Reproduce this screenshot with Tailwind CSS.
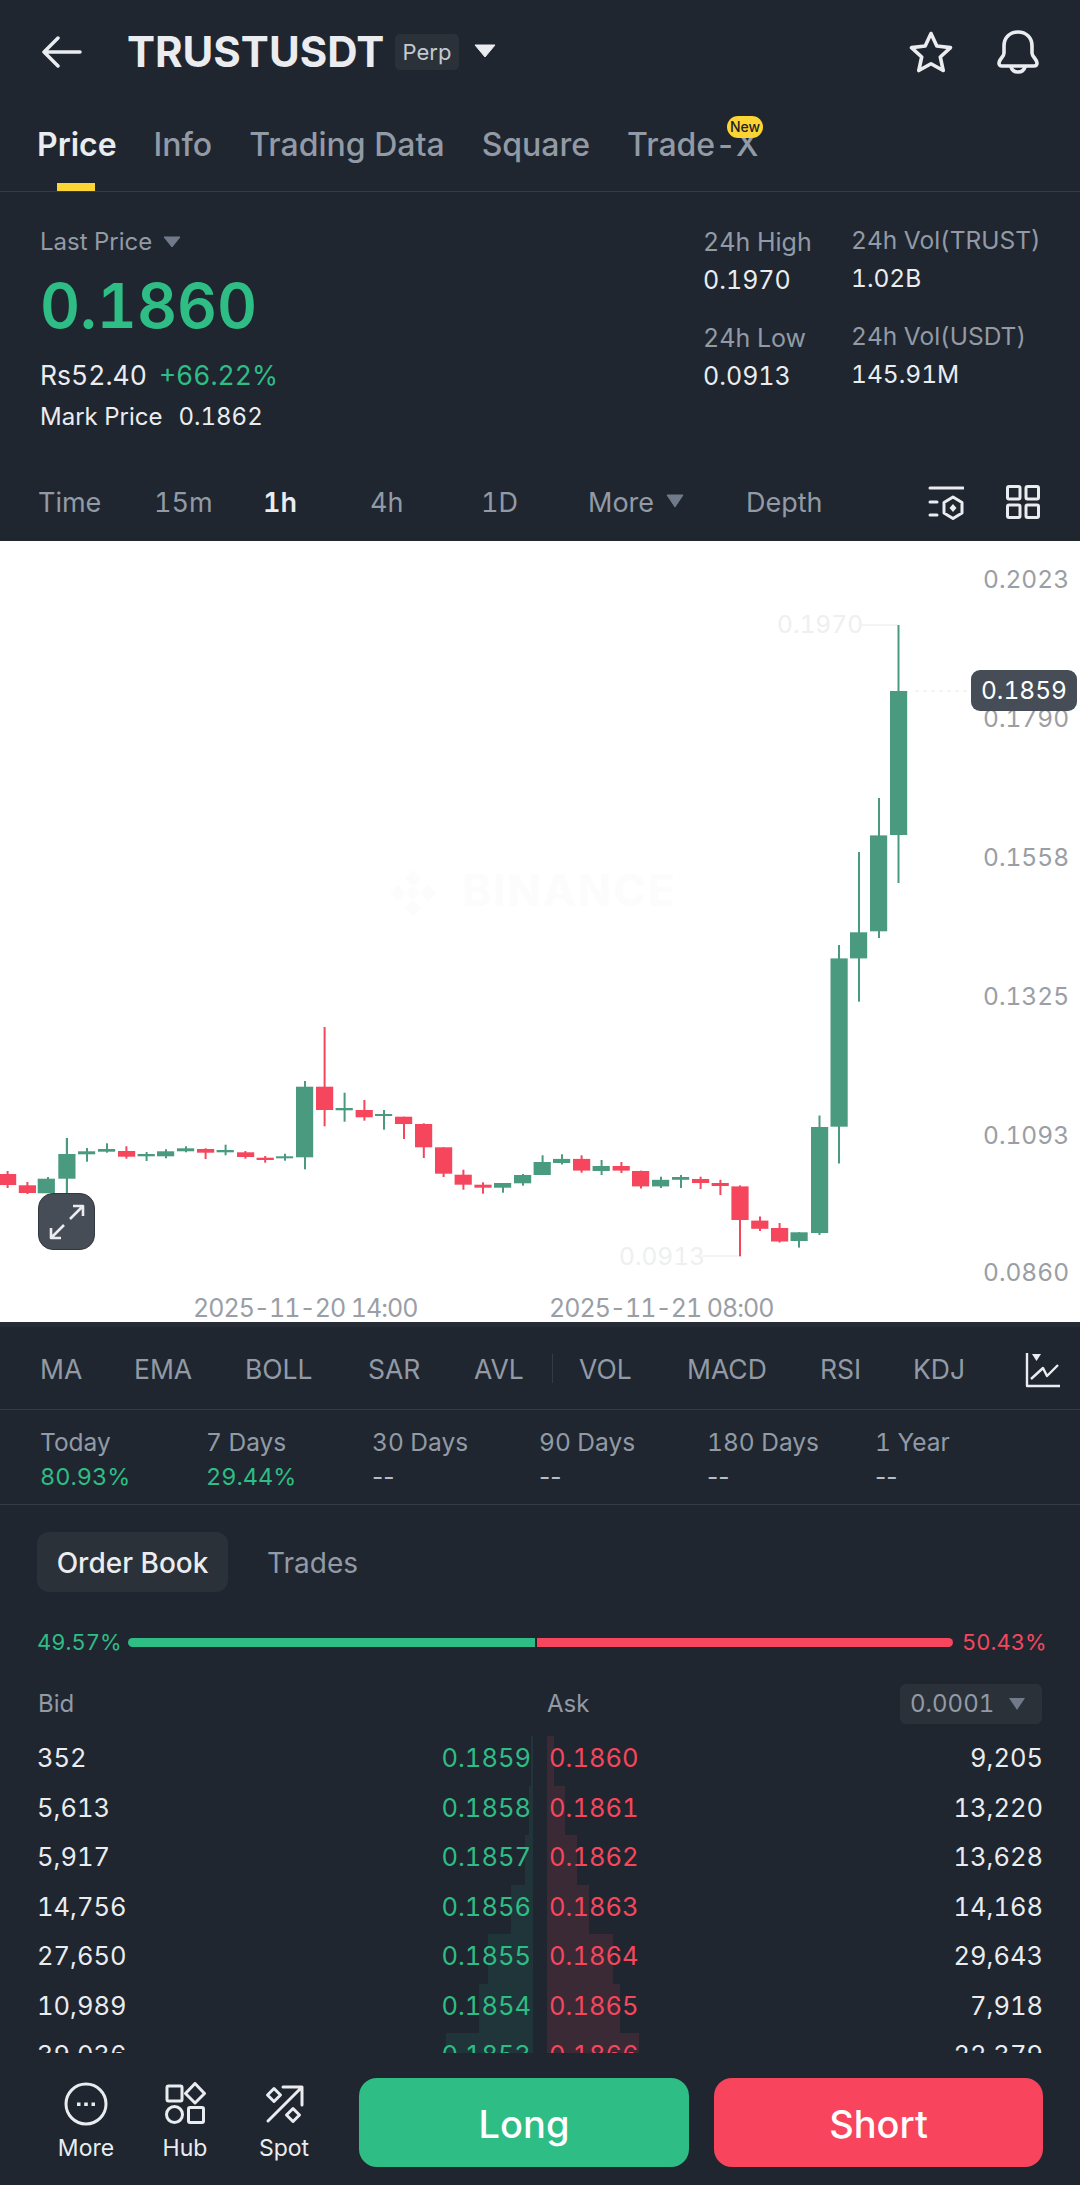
<!DOCTYPE html>
<html><head><meta charset="utf-8"><script src="https://cdn.jsdelivr.net/npm/@tailwindcss/browser@4"></script></head>
<body class="m-0">
<div class="relative w-[1080px] h-[2185px] overflow-hidden bg-[#1f2630] text-[#eaecef] [font-family:Inter,sans-serif] tabular-nums flex flex-col">

<header class="h-[104px] flex items-center shrink-0">
  <svg class="ml-[42px] w-[40px] h-[32px]" viewBox="0 0 40 32" fill="none" stroke="#eaecef" stroke-width="3.5" stroke-linecap="round" stroke-linejoin="round"><path d="M16 2 L2 16 L16 30 M2 16 H38"/></svg>
  <div class="ml-[45px] w-[256px] whitespace-nowrap text-[42px] leading-[50px] font-bold text-[#eaecef]">TRUSTUSDT</div>
  <div class="ml-[12px] w-[64px] h-[36px] rounded-[5px] bg-[#2b3139] text-[22px] leading-[36px] text-center text-[#c4c9d1]">Perp</div>
  <svg class="ml-[15px] w-[22px] h-[14px] mb-[2px]" viewBox="0 0 22 14"><path d="M1 1 H21 L11 13 Z" fill="#eaecef" stroke="#eaecef" stroke-linejoin="round"/></svg>
  <div class="ml-auto mr-[41px] flex items-center gap-[44px]">
    <svg class="w-[44px] h-[42px]" viewBox="0 0 44 42" fill="none" stroke="#eaecef" stroke-width="3.6" stroke-linejoin="round"><path d="M22 2.5 L27.8 15 L41.5 16.6 L31.3 26 L34.2 39.5 L22 32.7 L9.8 39.5 L12.7 26 L2.5 16.6 L16.2 15 Z"/></svg>
    <svg class="w-[42px] h-[44px]" viewBox="0 0 42 44" fill="none" stroke="#eaecef" stroke-width="3.6" stroke-linejoin="round" stroke-linecap="round"><path d="M7 23 V16 C7 7.5 13 2 21 2 C29 2 35 7.5 35 16 V23 C35 27 40 29 40 33 C40 35 39 36 37 36 H5 C3 36 2 35 2 33 C2 29 7 27 7 23 Z"/><path d="M14 37 C15 40.5 18 42 21 42 C24 42 27 40.5 28 37"/></svg>
  </div>
</header>

<nav class="relative h-[88px] shrink-0 border-b border-[#333b47] text-[32px] leading-[40px] text-[#929aa5] font-medium">
  <div class="flex pl-[37px] pt-[21px] gap-[37px]">
    <span class="text-[#eaecef] font-semibold">Price</span><span>Info</span><span>Trading Data</span><span>Square</span><span>Trade-X</span>
  </div>
  <div class="absolute left-[57px] bottom-0 w-[38px] h-[8px] bg-[#fcd535]"></div>
  <div class="absolute left-[727px] top-[12px] w-[36px] h-[22px] rounded-full bg-[#fcd535] text-[#1e2329] text-[14px] leading-[22px] text-center font-medium">New</div>
</nav>

<section class="h-[274px] shrink-0 flex relative">
  <div class="pl-[40px] w-[703px] shrink-0">
    <div class="mt-[36px] h-[28px] flex items-center text-[24px] leading-[28px] text-[#929aa5]">Last Price
      <svg class="ml-[11px] w-[18px] h-[12px]" viewBox="0 0 18 12"><path d="M1 1 H17 L9 11 Z" fill="#707a8a" stroke="#707a8a" stroke-linejoin="round"/></svg></div>
    <div class="mt-[14px] text-[62px] leading-[72px] font-semibold text-[#2ebd85]">0.1860</div>
    <div class="mt-[16px] flex gap-[12px] text-[26.5px] leading-[34px]"><span>Rs52.40</span><span class="text-[#2ebd85]">+66.22%</span></div>
    <div class="mt-[9px] flex gap-[16px] text-[24px] leading-[32px]"><span>Mark Price</span><span>0.1862</span></div>
  </div>
  <div class="w-[148px] shrink-0 text-[25px] leading-[32px]">
    <div class="mt-[34px] text-[#929aa5]">24h High</div>
    <div class="mt-[6px]">0.1970</div>
    <div class="mt-[26px] text-[#929aa5]">24h Low</div>
    <div class="mt-[6px]">0.0913</div>
  </div>
  <div class="text-[24.5px] leading-[32px]">
    <div class="mt-[32px] text-[#929aa5]">24h Vol(TRUST)</div>
    <div class="mt-[6px]">1.02B</div>
    <div class="mt-[26px] text-[#929aa5]">24h Vol(USDT)</div>
    <div class="mt-[6px]">145.91M</div>
  </div>
</section>

<div class="h-[75px] pb-[1px] shrink-0 relative flex items-center text-[27px] text-[#929aa5] leading-[36px]">
  <span class="ml-[38px] w-[116px]">Time</span>
  <span class="w-[109px]">15m</span>
  <span class="w-[107px] text-[#eaecef] font-semibold">1h</span>
  <span class="w-[111px]">4h</span>
  <span class="w-[107px]">1D</span>
  <span class="w-[78px]">More</span>
  <svg class="w-[18px] h-[14px] mb-[4px] mr-[62px]" viewBox="0 0 18 14"><path d="M1 1 H17 L9 13 Z" fill="#707a8a" stroke="#707a8a" stroke-linejoin="round"/></svg>
  <span>Depth</span>
  <svg class="absolute left-[928px] top-[20px] w-[36px] h-[34px]" viewBox="0 0 36 34" fill="none" stroke="#eaecef" stroke-width="3" stroke-linejoin="round" stroke-linecap="round"><path d="M2 2 H35 M2 16 H9 M2 29 H9"/><path d="M25 11 L34 16.5 V27 L25 32.5 L16 27 V16.5 Z"/><path d="M25 18 L28.5 22 L25 26 L21.5 22 Z" fill="#eaecef" stroke="none"/></svg>
  <svg class="absolute left-[1006px] top-[19px] w-[34px] h-[34px]" viewBox="0 0 34 34" fill="none" stroke="#eaecef" stroke-width="3"><rect x="1.5" y="1.5" width="12.5" height="12.5" rx="1.5"/><rect x="20" y="1.5" width="12.5" height="12.5" rx="1.5"/><rect x="1.5" y="20" width="12.5" height="12.5" rx="1.5"/><rect x="20" y="20" width="12.5" height="12.5" rx="1.5"/></svg>
</div>

<section class="relative h-[781px] shrink-0 bg-white overflow-hidden">
  <svg class="absolute left-0 top-0 w-[1080px] h-[781px]" viewBox="0 541 1080 781">
    <g stroke="#f0f1f2" stroke-width="1.5" fill="none"><path d="M862 625 H898"/><path d="M702 1256 H740"/><path d="M915 691 H970" stroke-dasharray="4 4"/></g>
    <path d="M413 870 L421 878 L413 886 L405 878 Z M398 885 L406 893 L398 901 L390 893 Z M428 885 L436 893 L428 901 L420 893 Z M413 900 L421 908 L413 916 L405 908 Z M413 886 L420 893 L413 900 L406 893 Z" fill="#fcfcfc"/>
    <g fill="#4a9a80">
      <rect x="47" y="1177" width="2" height="16"/><rect x="37.7" y="1178.7" width="17.2" height="14.6"/>
      <rect x="65.8" y="1138" width="2.2" height="59"/><rect x="58.3" y="1154" width="17.2" height="24.7"/>
      <rect x="86" y="1148" width="2" height="13.7"/><rect x="78" y="1151.3" width="17.2" height="3"/>
      <rect x="106" y="1143.3" width="2" height="9.4"/><rect x="98" y="1149" width="17.2" height="2.7"/>
      <rect x="145.6" y="1152" width="2" height="9"/><rect x="137.6" y="1154" width="17.2" height="2.3"/>
      <rect x="165" y="1149.3" width="2" height="9"/><rect x="157" y="1151.3" width="17.2" height="5"/>
      <rect x="185" y="1146.3" width="2" height="6"/><rect x="177" y="1148.3" width="17.2" height="3"/>
      <rect x="224.6" y="1144.7" width="2" height="10.6"/><rect x="216.6" y="1150" width="17.2" height="2.3"/>
      <rect x="284" y="1153.7" width="2" height="7"/><rect x="276" y="1156.3" width="17.2" height="2"/>
      <rect x="304" y="1081" width="2" height="88.3"/><rect x="296" y="1086.7" width="17.2" height="70.6"/>
      <rect x="343.6" y="1092.7" width="2" height="29"/><rect x="335.6" y="1108" width="17.2" height="2.3"/>
      <rect x="383" y="1110" width="2" height="19.7"/><rect x="375" y="1114" width="17.2" height="2"/>
      <rect x="502" y="1183" width="2" height="9.7"/><rect x="494" y="1183" width="17.2" height="4.7"/>
      <rect x="522" y="1174" width="2" height="11.7"/><rect x="514" y="1175" width="17.2" height="8.3"/>
      <rect x="541.6" y="1155.3" width="2" height="19.7"/><rect x="533.6" y="1162" width="17.2" height="13"/>
      <rect x="561" y="1154.3" width="2" height="10.2"/><rect x="553" y="1158.9" width="17.2" height="4.1"/>
      <rect x="600.6" y="1160" width="2" height="15"/><rect x="592.6" y="1166" width="17.2" height="5"/>
      <rect x="660" y="1176.7" width="2" height="11.3"/><rect x="652" y="1179.8" width="17.2" height="6.6"/>
      <rect x="680" y="1175" width="2" height="13"/><rect x="672" y="1177" width="17.2" height="2.8"/>
      <rect x="798" y="1232.3" width="2" height="15.3"/><rect x="790.5" y="1232.3" width="17.2" height="8.7"/>
      <rect x="818.5" y="1115.5" width="2" height="119.5"/><rect x="811" y="1127" width="17.2" height="106"/>
      <rect x="838" y="945" width="2" height="218.5"/><rect x="830.5" y="958.4" width="17.2" height="168.3"/>
      <rect x="858" y="852" width="2" height="149.7"/><rect x="850" y="932.3" width="17.2" height="26.1"/>
      <rect x="878" y="798" width="2" height="140"/><rect x="870" y="835.4" width="17.2" height="95.9"/>
      <rect x="897.5" y="625" width="2" height="258"/><rect x="890" y="691" width="17.2" height="144"/>
    </g>
    <g fill="#f6465d">
      <rect x="6.6" y="1171" width="2" height="17"/><rect x="-1" y="1174" width="17.2" height="11"/>
      <rect x="26.4" y="1182" width="2" height="12"/><rect x="18.8" y="1185.3" width="17.2" height="7.7"/>
      <rect x="125.4" y="1146.3" width="2" height="12.4"/><rect x="118" y="1151" width="17.2" height="5.7"/>
      <rect x="204.6" y="1148.3" width="2" height="10.7"/><rect x="197" y="1149" width="17.2" height="3.7"/>
      <rect x="244.4" y="1151" width="2" height="7.7"/><rect x="237" y="1152.3" width="17.2" height="4.7"/>
      <rect x="264.2" y="1156" width="2" height="6.7"/><rect x="256.6" y="1157.7" width="17.2" height="2.3"/>
      <rect x="323.6" y="1027" width="2" height="99.3"/><rect x="316" y="1086.7" width="17.2" height="23.3"/>
      <rect x="363.4" y="1100" width="2" height="20.7"/><rect x="355.6" y="1110" width="17.2" height="7.3"/>
      <rect x="403" y="1116.7" width="2" height="22.3"/><rect x="395" y="1116.7" width="17.2" height="7.3"/>
      <rect x="422.8" y="1123.3" width="2" height="34.7"/><rect x="415" y="1124" width="17.2" height="23.3"/>
      <rect x="442.6" y="1147.3" width="2" height="29.7"/><rect x="435" y="1147.3" width="17.2" height="26.4"/>
      <rect x="462.4" y="1169.7" width="2" height="20"/><rect x="454.6" y="1174.7" width="17.2" height="10"/>
      <rect x="482" y="1182.3" width="2" height="11.4"/><rect x="474.4" y="1184.7" width="17.2" height="3"/>
      <rect x="580.6" y="1155.3" width="2" height="17.4"/><rect x="573" y="1158.9" width="17.2" height="11.7"/>
      <rect x="620.4" y="1162" width="2" height="11"/><rect x="612.6" y="1166" width="17.2" height="4.6"/>
      <rect x="640" y="1170.6" width="2" height="17.9"/><rect x="632" y="1171" width="17.2" height="15.4"/>
      <rect x="699.6" y="1176.7" width="2" height="12.3"/><rect x="692" y="1179" width="17.2" height="4"/>
      <rect x="719.4" y="1179.8" width="2" height="15.2"/><rect x="711.6" y="1183" width="17.2" height="3"/>
      <rect x="739" y="1185.4" width="2" height="70.9"/><rect x="731.4" y="1186.4" width="17.2" height="33.6"/>
      <rect x="759" y="1216.5" width="2" height="14.5"/><rect x="751.2" y="1220.6" width="17.2" height="8.2"/>
      <rect x="778.6" y="1223" width="2" height="19.6"/><rect x="771" y="1228" width="17.2" height="13.5"/>
    </g>
  </svg>
  <div class="absolute left-[462px] top-[325px] text-[44px] leading-[48px] font-bold text-[#fcfcfc] tracking-[2px]">BINANCE</div>
  <div class="absolute left-[983px] top-[22px] text-[24.5px] leading-[32px] text-[#9a9ea5]">0.2023</div>
  <div class="absolute left-[983px] top-[161px] text-[24.5px] leading-[32px] text-[#9a9ea5]">0.1790</div>
  <div class="absolute left-[983px] top-[300px] text-[24.5px] leading-[32px] text-[#9a9ea5]">0.1558</div>
  <div class="absolute left-[983px] top-[439px] text-[24.5px] leading-[32px] text-[#9a9ea5]">0.1325</div>
  <div class="absolute left-[983px] top-[578px] text-[24.5px] leading-[32px] text-[#9a9ea5]">0.1093</div>
  <div class="absolute left-[983px] top-[715px] text-[24.5px] leading-[32px] text-[#9a9ea5]">0.0860</div>
  <div class="absolute left-[971px] top-[129px] w-[106px] h-[41px] rounded-[9px] bg-[#474d57] text-white text-[24.5px] leading-[41px] text-center">0.1859</div>
  <div class="absolute left-[777px] top-[67px] text-[24.5px] leading-[32px] text-[#eeeff0]">0.1970</div>
  <div class="absolute left-[619px] top-[699px] text-[24.5px] leading-[32px] text-[#eeeff0]">0.0913</div>
  <div class="absolute left-[193px] top-[753px] text-[25px] leading-[28px] tracking-[-1px] text-[#9a9ea5]">2025-11-20 14:00</div>
  <div class="absolute left-[549px] top-[753px] text-[25px] leading-[28px] tracking-[-1px] text-[#9a9ea5]">2025-11-21 08:00</div>
  <div class="absolute left-[38px] top-[652px] w-[57px] h-[57px] rounded-[15px] bg-[#474d57] border border-[#33383f]">
    <svg class="w-[55px] h-[55px]" viewBox="0 0 55 55" fill="none" stroke="#eaecef" stroke-width="2.6" stroke-linejoin="round"><path d="M31 25 L44 12 M34 12 H44 V22"/><path d="M25 31 L12 44 M12 34 V44 H22"/></svg>
  </div>
</section>

<div class="h-[88px] pt-[1px] shrink-0 relative border-t-[5px] border-t-[#262c36] border-b border-b-[#333b47] flex items-center text-[26.5px] leading-[34px] text-[#929aa5]">
  <span class="ml-[40px] w-[94px]">MA</span><span class="w-[111px]">EMA</span><span class="w-[123px]">BOLL</span><span class="w-[106px]">SAR</span><span class="w-[78px]">AVL</span>
  <span class="w-[1px] h-[29px] bg-[#333b47] mr-[26px]"></span>
  <span class="w-[108px]">VOL</span><span class="w-[133px]">MACD</span><span class="w-[93px]">RSI</span><span>KDJ</span>
  <svg class="absolute left-[1025px] top-[25px] w-[36px] h-[36px]" viewBox="0 0 36 36" fill="none" stroke="#eaecef" stroke-width="2.4" stroke-linejoin="round"><path d="M2 1 V34 H35"/><path d="M6 27 L18 16 L22 24 L33 13"/><path d="M7 2 H16 L11.5 9 Z" fill="#eaecef" stroke="none"/></svg>
</div>

<div class="h-[95px] shrink-0 border-b border-[#333b47] flex pt-[16px] text-[24.5px] leading-[32px] text-[#929aa5]">
  <div class="ml-[40px] w-[166px]"><div>Today</div><div class="mt-[3px] text-[23.5px] text-[#2ebd85]">80.93%</div></div>
  <div class="w-[166px]"><div>7 Days</div><div class="mt-[3px] text-[23.5px] text-[#2ebd85]">29.44%</div></div>
  <div class="w-[167px]"><div>30 Days</div><div class="mt-[3px] normal-nums text-[#b7bdc6]">--</div></div>
  <div class="w-[168px]"><div>90 Days</div><div class="mt-[3px] normal-nums text-[#b7bdc6]">--</div></div>
  <div class="w-[168px]"><div>180 Days</div><div class="mt-[3px] normal-nums text-[#b7bdc6]">--</div></div>
  <div><div>1 Year</div><div class="mt-[3px] normal-nums text-[#b7bdc6]">--</div></div>
</div>

<div class="mt-[27px] flex items-center h-[60px] shrink-0 ml-[37px] text-[28px] leading-[62px]">
  <div class="w-[191px] h-[60px] rounded-[12px] bg-[#2b3139] text-center text-[#eaecef] font-medium">Order Book</div>
  <div class="ml-[39px] pt-[2px] text-[#929aa5]">Trades</div>
</div>

<div class="mt-[34px] h-[32px] shrink-0 flex items-center pl-[37px] text-[22px] leading-[32px]">
  <span class="w-[91px] text-[#2ebd85]">49.57%</span>
  <span class="w-[407px] h-[9px] rounded-l-full bg-[#2ebd85]"></span>
  <span class="ml-[2px] w-[416px] h-[9px] rounded-r-full bg-[#f6465d]"></span>
  <span class="ml-[9px] text-[#f6465d]">50.43%</span>
</div>

<div class="mt-[26px] h-[40px] shrink-0 flex items-center text-[24px] leading-[42px] text-[#929aa5] pl-[38px]">
  <span class="w-[509px]">Bid</span><span>Ask</span>
  <div class="ml-auto mr-[38px] w-[142px] h-[40px] rounded-[6px] bg-[#2b3139] flex items-center pl-[10px] gap-[14px]">0.0001<svg class="w-[18px] h-[14px]" viewBox="0 0 18 14"><path d="M1 1 H17 L9 13 Z" fill="#707a8a"/></svg></div>
</div>

<div class="relative mt-[8px] h-[321px] shrink-0 overflow-hidden text-[25.5px] leading-[49.5px]">
  <div class="absolute left-[531px] top-[4px] w-[2px] h-[50px] bg-[#2ebd85]/10"></div>
  <div class="absolute left-[529px] top-[54px] w-[4px] h-[49px] bg-[#2ebd85]/10"></div>
  <div class="absolute left-[525px] top-[103px] w-[8px] h-[50px] bg-[#2ebd85]/10"></div>
  <div class="absolute left-[511px] top-[153px] w-[22px] h-[49px] bg-[#2ebd85]/10"></div>
  <div class="absolute left-[488px] top-[202px] w-[45px] h-[50px] bg-[#2ebd85]/10"></div>
  <div class="absolute left-[479px] top-[252px] w-[54px] h-[49px] bg-[#2ebd85]/10"></div>
  <div class="absolute left-[446px] top-[301px] w-[87px] h-[20px] bg-[#2ebd85]/10"></div>
  <div class="absolute left-[547px] top-[4px] w-[7px] h-[50px] bg-[#f6465d]/12"></div>
  <div class="absolute left-[547px] top-[54px] w-[18px] h-[49px] bg-[#f6465d]/12"></div>
  <div class="absolute left-[547px] top-[103px] w-[30px] h-[50px] bg-[#f6465d]/12"></div>
  <div class="absolute left-[547px] top-[153px] w-[42px] h-[49px] bg-[#f6465d]/12"></div>
  <div class="absolute left-[547px] top-[202px] w-[66px] h-[50px] bg-[#f6465d]/12"></div>
  <div class="absolute left-[547px] top-[252px] w-[73px] h-[49px] bg-[#f6465d]/12"></div>
  <div class="absolute left-[547px] top-[301px] w-[92px] h-[20px] bg-[#f6465d]/12"></div>
  <div class="relative grid grid-cols-[261px_233px_255px_257px] pl-[37px] w-[1080px] pt-[1px]">
    <span>352</span><span class="text-right text-[#2ebd85]">0.1859</span><span class="pl-[18px] text-[#f6465d]">0.1860</span><span class="text-right">9,205</span>
    <span>5,613</span><span class="text-right text-[#2ebd85]">0.1858</span><span class="pl-[18px] text-[#f6465d]">0.1861</span><span class="text-right">13,220</span>
    <span>5,917</span><span class="text-right text-[#2ebd85]">0.1857</span><span class="pl-[18px] text-[#f6465d]">0.1862</span><span class="text-right">13,628</span>
    <span>14,756</span><span class="text-right text-[#2ebd85]">0.1856</span><span class="pl-[18px] text-[#f6465d]">0.1863</span><span class="text-right">14,168</span>
    <span>27,650</span><span class="text-right text-[#2ebd85]">0.1855</span><span class="pl-[18px] text-[#f6465d]">0.1864</span><span class="text-right">29,643</span>
    <span>10,989</span><span class="text-right text-[#2ebd85]">0.1854</span><span class="pl-[18px] text-[#f6465d]">0.1865</span><span class="text-right">7,918</span>
    <span>39,036</span><span class="text-right text-[#2ebd85]">0.1853</span><span class="pl-[18px] text-[#f6465d]">0.1866</span><span class="text-right">22,379</span>
  </div>
</div>

<footer class="mt-[25px] h-[89px] shrink-0 flex relative">
  <div class="absolute left-[56px] top-[4px] w-[60px] flex flex-col items-center text-[23px] leading-[30px]">
    <svg class="w-[44px] h-[44px]" viewBox="0 0 44 44" fill="none" stroke="#eaecef" stroke-width="3"><circle cx="22" cy="22" r="20"/><path d="M13 20.5 H16.5 V24 H13 Z M20.2 20.5 H23.8 V24 H20.2 Z M27.5 20.5 H31 V24 H27.5 Z" fill="#eaecef" stroke="none"/></svg>
    <span class="mt-[7px]">More</span>
  </div>
  <div class="absolute left-[155px] top-[4px] w-[60px] flex flex-col items-center text-[23px] leading-[30px]">
    <svg class="w-[44px] h-[44px]" viewBox="0 0 44 44" fill="none" stroke="#eaecef" stroke-width="3" stroke-linejoin="round"><rect x="4" y="4" width="15" height="15" rx="1.5"/><path d="M32 1.5 L41.5 11.5 L32 21 L22.5 11.5 Z"/><circle cx="11.5" cy="32.5" r="8"/><rect x="25.5" y="25.5" width="15" height="15" rx="1.5"/></svg>
    <span class="mt-[7px]">Hub</span>
  </div>
  <div class="absolute left-[254px] top-[4px] w-[60px] flex flex-col items-center text-[23px] leading-[30px]">
    <svg class="w-[44px] h-[44px]" viewBox="0 0 44 44" fill="none" stroke="#eaecef" stroke-width="3" stroke-linejoin="round" stroke-linecap="round"><path d="M6 39 L40 5 M21 5 H40 V23"/><path d="M12 6.5 L18.5 13 L12 19.5 L5.5 13 Z"/><path d="M31 26.5 L37.5 33 L31 39.5 L24.5 33 Z"/></svg>
    <span class="mt-[7px]">Spot</span>
  </div>
  <div class="ml-[359px] w-[330px] h-[89px] rounded-[18px] bg-[#2ebd85] text-center text-[38px] leading-[92px] font-medium text-white">Long</div>
  <div class="ml-[25px] w-[329px] h-[89px] rounded-[18px] bg-[#f8455d] text-center text-[38px] leading-[92px] font-medium text-white">Short</div>
</footer>
</div>
</body></html>
